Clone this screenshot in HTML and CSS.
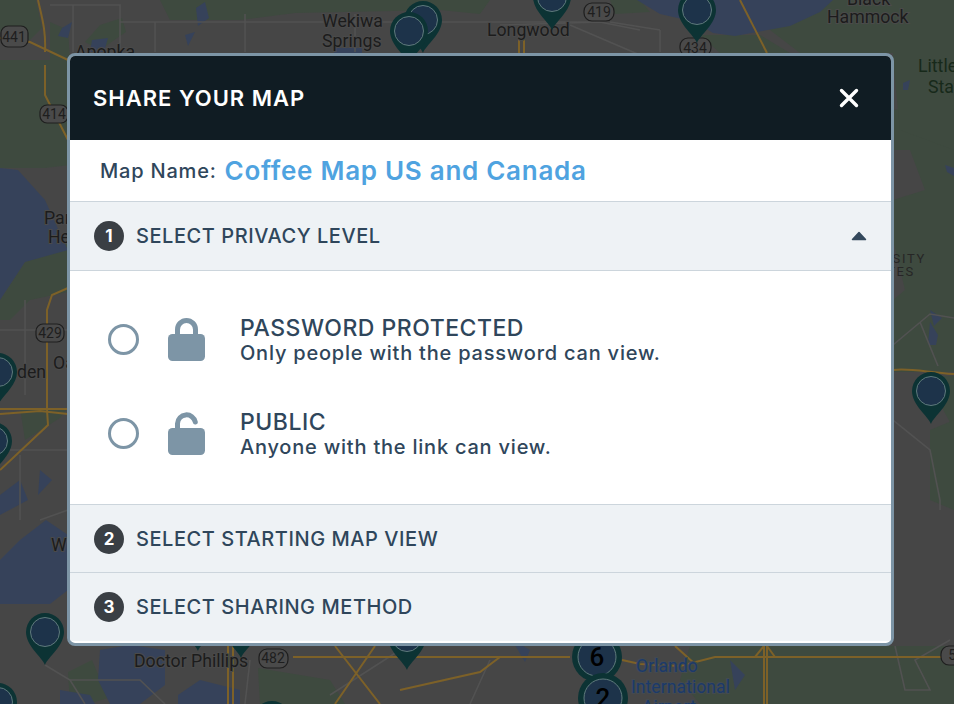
FILE: index.html
```html
<!DOCTYPE html>
<html lang="en">
<head>
<meta charset="utf-8">
<title>Share your map</title>
<link rel="stylesheet" href="styles.css">
</head>
<body>
<svg class="map" viewBox="0 0 954 704" width="954" height="704" aria-hidden="true">
  <defs>
    <g id="pin">
      <path class="pin-body" d="M0 33C-3 25 -19 14 -19 0A19 19 0 0 1 19 0C19 14 3 25 0 33Z"/>
      <circle class="pin-core" r="14.5"/>
    </g>
    <g id="cluster">
      <circle class="pin-body" r="25"/>
      <circle class="pin-core" r="19"/>
    </g>
  </defs>
  <rect class="land" width="954" height="704"/>

  <!-- vegetation -->
  <path class="green" d="M0 0H36L42 28L30 40L0 32Z"/>
  <path class="green" d="M50 22L68 30L70 60H50Z"/>
  <path class="green" d="M100 25L122 18L126 32L100 50L85 42Z"/>
  <path class="green" d="M160 0H490L480 14L440 10L295 13L240 20H170Z"/>
  <path class="green" d="M610 0H640L650 12L615 14Z"/>
  <path class="green" d="M0 60H70V165L45 168L0 168Z"/>
  <path class="green" d="M25 262L68 240V292L30 300L10 320L0 320V300Z"/>
  <path class="green" d="M700 35L760 35L790 53H720Z"/>
  <path class="green" d="M790 0H954V53H800L770 30Z"/>
  <path class="green" d="M893 53H954V372H893V300L905 290L893 240V200L925 190L910 150L893 150V110L925 105L905 70L893 70Z"/>
  <path class="green" d="M893 60L935 60L954 110V150L900 130Z"/>
  <path class="green" d="M925 376H954V430L938 400Z"/>
  <path class="green" d="M930 430L954 420V510L930 500Z"/>
  <path class="green" d="M690 646H954V704H700L680 680Z"/>
  <path class="green" d="M68 672L92 660L108 698L88 704H70Z"/>
  <path class="green" d="M258 668L330 680L345 704H260Z"/>
  <path class="green" d="M20 408H68L60 418L25 440Z"/>

  <!-- water -->
  <path class="water" d="M0 168L18 170L45 200L63 240L68 250L25 262L0 300Z"/>
  <path class="water" d="M637 0H833L820 12L790 26L735 36L713 33L695 22L660 14Z"/>
  <path class="water" d="M0 560L20 540L46 520L68 535V590L50 604L0 604Z"/>
  <path class="water" d="M0 495L20 480L28 500L0 515Z"/>
  <path class="water" d="M40 470L52 480L38 495Z"/>
  <path class="water" d="M100 650L130 645L165 650L165 685L140 704H110L98 680Z"/>
  <path class="water" d="M178 695L200 680L240 690L240 704H178Z"/>
  <path class="water" d="M60 690L90 695L95 704H60Z"/>
  <path class="water" d="M196 8L205 2L209 18L198 26Z"/>
  <path class="water" d="M62 28L72 22L68 38L58 36Z"/>
  <path class="water" d="M92 40L108 38L104 52H90Z"/>
  <path class="water" d="M185 35L195 32L188 46Z"/>
  <path class="water" d="M334 48H362V56H334Z"/>
  <path class="water" d="M903 83L910 80L908 90L903 90Z"/>
  <path class="water" d="M945 165L954 168V176L947 172Z"/>
  <path class="water" d="M930 310L942 318L934 326Z"/>
  <path class="water" d="M930 322L938 335L936 345H928Z"/>
  <path class="water" d="M512 640L530 650L525 662Z"/>
  <path class="water" d="M730 660L745 675L735 690Z"/>

  <!-- minor streets -->
  <path class="minor" d="M50 5H120V52M73 5V52M120 22H600M155 22V52M245 14V52M355 14V52M610 22L660 30M660 30V52"/>
  <path class="minor" d="M500 25L600 22L640 30M570 25L640 55"/>
  <path class="minor" d="M893 345L930 314L954 318M920 322L938 366M893 372V420L930 450L940 500V510"/>
  <path class="minor" d="M45 665L70 680L85 704M70 680L140 680L165 704M25 300V395M0 330H68"/>
  <path class="minor" d="M0 450H68M20 455V520M40 520L68 510"/>
  <path class="minor" d="M250 660L245 704M330 695L400 650M490 660L470 704M895 646L905 690H930L915 660L950 640"/>

  <!-- highways -->
  <g class="road">
    <path d="M38 0C42 18 46 30 45 52M0 38L30 42L68 60"/>
    <path d="M45 65V95L68 140"/>
    <path d="M68 288L52 295L47 310V410L48 425L0 470"/>
    <path d="M0 409H68M0 414L40 411L68 414"/>
    <path d="M519 30V53M524 30V53"/>
    <path d="M740 0L767 53"/>
    <path d="M893 370C910 368 925 372 954 374"/>
    <path d="M293 657H570M622 660L640 664L680 666L715 657H954"/>
    <path d="M400 690L480 672L500 657"/>
    <path d="M228 646V704M233 646V704M335 646L380 704M375 646L335 704"/>
    <path d="M675 646L695 664M764 646V704M767 646V704M755 657L764 646M775 657L767 646"/>
  </g>

  <!-- place labels -->
  <text class="place" x="322" y="27">Wekiwa</text>
  <text class="place" x="322" y="47">Springs</text>
  <text class="place" x="487" y="36">Longwood</text>
  <text class="place" x="847" y="5">Black</text>
  <text class="place" x="827" y="23">Hammock</text>
  <text class="place leafy" x="918" y="72">Little</text>
  <text class="place leafy" x="928" y="93">State</text>
  <text class="place" x="75" y="58">Apopka</text>
  <text class="place" x="44" y="224">Park</text>
  <text class="place" x="48" y="243">Heights</text>
  <text class="place" x="17" y="378">den</text>
  <text class="place" x="53" y="369">Oak</text>
  <text class="place" x="51" y="551">Windermere</text>
  <text class="place" x="134" y="667">Doctor Phillips</text>
  <text class="place-sm" x="926" y="263">UNIVERSITY</text>
  <text class="place-sm" x="915" y="276">STATES</text>
  <text class="place airport" x="636" y="672">Orlando</text>
  <text class="place airport airport-end" x="730" y="693">International</text>
  <text class="place airport" x="642" y="713">Airport</text>

  <!-- route shields -->
  <rect class="shield" x="1" y="26" width="27" height="21" rx="7"/>
  <text class="shield-t" x="14" y="42">441</text>
  <rect class="shield" x="40" y="105" width="28" height="18" rx="7"/>
  <text class="shield-t" x="54" y="119">414</text>
  <rect class="shield" x="36" y="324" width="28" height="18" rx="7"/>
  <text class="shield-t" x="50" y="338">429</text>
  <rect class="shield" x="584" y="3" width="30" height="18" rx="8"/>
  <text class="shield-t" x="599" y="17">419</text>
  <rect class="shield" x="680" y="38" width="31" height="18" rx="8"/>
  <text class="shield-t" x="695" y="53">434</text>
  <rect class="shield" x="259" y="649" width="29" height="19" rx="8"/>
  <text class="shield-t" x="273" y="663">482</text>
  <rect class="shield" x="941" y="646" width="30" height="19" rx="8"/>
  <text class="shield-t" x="956" y="660">52</text>

  <!-- markers -->
  <use href="#pin" x="423" y="20"/>
  <use href="#pin" x="409" y="31"/>
  <use href="#pin" x="552" y="-3"/>
  <use href="#pin" x="697" y="10"/>
  <use href="#pin" x="45" y="632"/>
  <use href="#pin" x="931" y="391"/>
  <use href="#pin" x="-2" y="372"/>
  <use href="#pin" x="-7" y="441"/>
  <use href="#pin" x="198" y="618"/>
  <use href="#pin" x="241" y="625"/>
  <use href="#pin" x="407" y="637"/>
  <use href="#pin" x="272" y="720"/>
  <use href="#pin" x="-2" y="702"/>
  <use href="#cluster" x="597" y="657"/>
  <use href="#cluster" x="603" y="698"/>
  <text class="cluster-n" x="597" y="666">6</text>
  <text class="cluster-n" x="603" y="707">2</text>
</svg>

<section class="modal">
  <header class="modal-head">
    <h1 class="modal-title">SHARE YOUR MAP</h1>
    <svg class="close" viewBox="0 0 20 20" width="20" height="20" aria-hidden="true"><path d="M2.5 2.5L17.5 17.5M17.5 2.5L2.5 17.5"/></svg>
  </header>

  <div class="name-row">
    <span class="name-label">Map Name:</span>
    <span class="name-value">Coffee Map US and Canada</span>
  </div>

  <div class="step step-first">
    <span class="step-num">1</span>
    <span class="step-title">SELECT PRIVACY LEVEL</span>
    <svg class="chevron" viewBox="0 0 16 10" width="16" height="10" aria-hidden="true"><path d="M8 1.5L14.5 8.5H1.5Z"/></svg>
  </div>

  <div class="options">
    <div class="option">
      <span class="radio"></span>
      <svg class="lock" viewBox="0 0 38 43" width="38" height="43" aria-hidden="true">
        <path class="lock-arc" d="M9.5 18V11.5A9 9 0 0 1 27.5 11.5V18"/>
        <rect class="lock-body" x="0" y="16" width="37" height="27" rx="4.5"/>
      </svg>
      <div class="option-text">
        <div class="option-title">PASSWORD PROTECTED</div>
        <div class="option-desc">Only people with the password can view.</div>
      </div>
    </div>
    <div class="option">
      <span class="radio"></span>
      <svg class="lock" viewBox="0 0 38 43" width="38" height="43" aria-hidden="true">
        <path class="lock-arc" d="M9.5 18V11.5A9 9 0 0 1 27.3 10"/>
        <rect class="lock-body" x="0" y="16" width="37" height="27" rx="4.5"/>
      </svg>
      <div class="option-text">
        <div class="option-title">PUBLIC</div>
        <div class="option-desc">Anyone with the link can view.</div>
      </div>
    </div>
  </div>

  <div class="step step-second">
    <span class="step-num">2</span>
    <span class="step-title">SELECT STARTING MAP VIEW</span>
  </div>
  <div class="step">
    <span class="step-num">3</span>
    <span class="step-title">SELECT SHARING METHOD</span>
  </div>
</section>
</body>
</html>
```

FILE: styles.css
```css
* { box-sizing: border-box; }
html, body { margin: 0; padding: 0; }
body {
  position: relative;
  width: 954px;
  height: 704px;
  overflow: hidden;
  background: #444;
  font-family: Inter, "Open Sans", sans-serif;
}

/* map backdrop */
.map { position: absolute; left: 0; top: 0; display: block; }
.land { fill: #464646; }
.green { fill: #3e4a3f; }
.water { fill: #36425a; }
.minor { fill: none; stroke: #525252; stroke-width: 1.6; }
.road { fill: none; stroke: #7d6128; stroke-width: 2; }
.pin-body { fill: #0c3334; }
.pin-core { fill: #1d334a; stroke: #5f7a7c; stroke-width: 1; }
.place { font: 17.7px Roboto, sans-serif; fill: #1c1c1c; stroke: #4a4a4a; stroke-width: 2px; paint-order: stroke; }
.leafy { fill: #17291a; stroke: #3e4a3f; }
.place-sm { font: 13px Roboto, sans-serif; letter-spacing: 1.7px; fill: #262626; text-anchor: end; }
.airport { fill: #1c3a6a; stroke: #434a50; }
.airport-end { text-anchor: end; }
.cluster-n { font: 500 26px Roboto, sans-serif; fill: #000; text-anchor: middle; }
.shield { fill: #4a4a4a; stroke: #1e1e1e; stroke-width: 1.2; }
.shield-t { font: 14px Roboto, sans-serif; fill: #1e1e1e; text-anchor: middle; }

/* modal */
.modal {
  position: absolute;
  left: 67px;
  top: 53px;
  width: 827px;
  height: 593px;
  border: 3px solid #7d95a6;
  border-radius: 8px;
  background: #fff;
  overflow: hidden;
  color: #2f465b;
}
.modal-head {
  height: 84px;
  padding: 0 32px 0 23px;
  display: flex;
  align-items: center;
  justify-content: space-between;
  background: #101c23;
}
.modal-title {
  margin: 0;
  color: #fff;
  font-size: 22px;
  font-weight: 600;
  letter-spacing: 1px;
}
.close { display: block; }
.close path { fill: none; stroke: #fff; stroke-width: 3.4; stroke-linecap: round; }

.name-row {
  height: 61px;
  padding: 0 30px;
  display: flex;
  align-items: center;
  gap: 8px;
}
.name-label { font-size: 20px; font-weight: 500; letter-spacing: 0.8px; }
.name-value { font-size: 26px; font-weight: 600; letter-spacing: 0.72px; color: #4fa3e0; }

.step {
  height: 69px;
  padding: 0 24px;
  display: flex;
  align-items: center;
  gap: 12px;
  background: #eef2f5;
  border-top: 1px solid #ccd5dc;
}
.step-first { border-bottom: 1px solid #ccd5dc; height: 70px; }
.step-second { height: 68px; }
.step-num {
  width: 30px;
  height: 30px;
  border-radius: 50%;
  background: #3a3f44;
  color: #fff;
  font-size: 17px;
  font-weight: 700;
  display: flex;
  align-items: center;
  justify-content: center;
}
.step-title { font-size: 20px; font-weight: 500; letter-spacing: 0.55px; }
.chevron { margin-left: auto; display: block; }
.chevron path { fill: #34495c; stroke: #34495c; stroke-width: 1.5; stroke-linejoin: round; }

.options {
  height: 233px;
  padding: 41px 38px 0;
  display: flex;
  flex-direction: column;
  gap: 38px;
  background: #fff;
}
.option { display: flex; align-items: center; height: 56px; }
.radio {
  width: 31px;
  height: 31px;
  margin-top: -2px;
  border: 3px solid #7d95a6;
  border-radius: 50%;
  flex: none;
}
.lock { margin: -2px 0 0 29px; flex: none; display: block; }
.lock-arc { fill: none; stroke: #7d95a6; stroke-width: 5; stroke-linecap: round; }
.lock-body { fill: #7d95a6; }
.option-text { margin-left: 34px; }
.option-title { font-size: 23px; font-weight: 500; letter-spacing: 0.5px; line-height: 26px; }
.option-desc { font-size: 20px; font-weight: 500; letter-spacing: 0.78px; line-height: 24px; }
```
